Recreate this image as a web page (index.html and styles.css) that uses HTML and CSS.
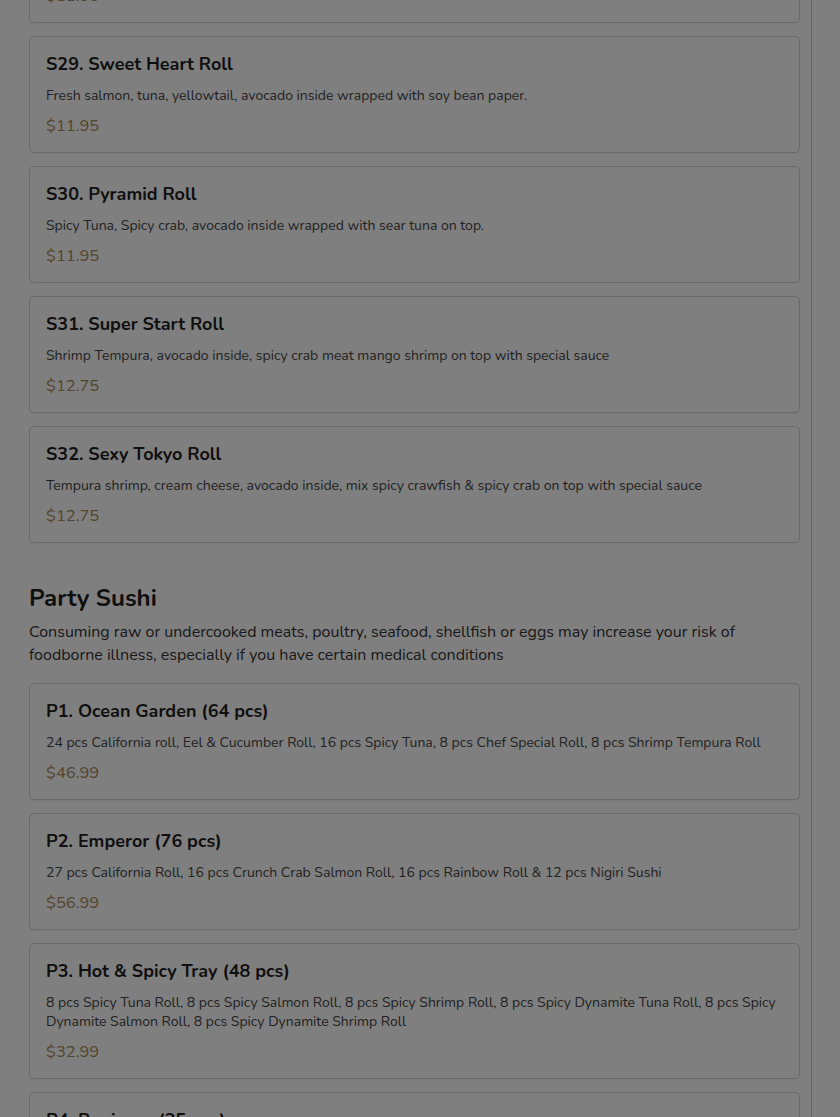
FILE: index.html
```html
<!DOCTYPE html>
<html lang="en">
<head>
<meta charset="utf-8">
<title>Menu</title>
<link rel="stylesheet" href="styles.css">
</head>
<body>
<div class="page">
  <main class="menu">
    <div class="scroll">
      <section class="section">
        <div class="cards">
          <article class="card">
            <h3 class="card-title">S28. Dragon Roll</h3>
            <p class="card-desc">Shrimp tempura, cucumber inside, eel &amp; avocado on top with eel sauce.</p>
            <p class="card-price">$11.95</p>
          </article>
          <article class="card">
            <h3 class="card-title">S29. Sweet Heart Roll</h3>
            <p class="card-desc">Fresh salmon, tuna, yellowtail, avocado inside wrapped with soy bean paper.</p>
            <p class="card-price">$11.95</p>
          </article>
          <article class="card">
            <h3 class="card-title">S30. Pyramid Roll</h3>
            <p class="card-desc">Spicy Tuna, Spicy crab, avocado inside wrapped with sear tuna on top.</p>
            <p class="card-price">$11.95</p>
          </article>
          <article class="card">
            <h3 class="card-title">S31. Super Start Roll</h3>
            <p class="card-desc">Shrimp Tempura, avocado inside, spicy crab meat mango shrimp on top with special sauce</p>
            <p class="card-price">$12.75</p>
          </article>
          <article class="card">
            <h3 class="card-title">S32. Sexy Tokyo Roll</h3>
            <p class="card-desc">Tempura shrimp, cream cheese, avocado inside, mix spicy crawfish &amp; spicy crab on top with special sauce</p>
            <p class="card-price">$12.75</p>
          </article>
        </div>
      </section>
      <section class="section section-head">
        <h2 class="section-title">Party Sushi</h2>
        <p class="section-desc">Consuming raw or undercooked meats, poultry, seafood, shellfish or eggs may increase your risk of foodborne illness, especially if you have certain medical conditions</p>
        <div class="cards">
          <article class="card">
            <h3 class="card-title">P1. Ocean Garden (64 pcs)</h3>
            <p class="card-desc">24 pcs California roll, Eel &amp; Cucumber Roll, 16 pcs Spicy Tuna, 8 pcs Chef Special Roll, 8 pcs Shrimp Tempura Roll</p>
            <p class="card-price">$46.99</p>
          </article>
          <article class="card">
            <h3 class="card-title">P2. Emperor (76 pcs)</h3>
            <p class="card-desc">27 pcs California Roll, 16 pcs Crunch Crab Salmon Roll, 16 pcs Rainbow Roll &amp; 12 pcs Nigiri Sushi</p>
            <p class="card-price">$56.99</p>
          </article>
          <article class="card">
            <h3 class="card-title">P3. Hot &amp; Spicy Tray (48 pcs)</h3>
            <p class="card-desc">8 pcs Spicy Tuna Roll, 8 pcs Spicy Salmon Roll, 8 pcs Spicy Shrimp Roll, 8 pcs Spicy Dynamite Tuna Roll, 8 pcs Spicy Dynamite Salmon Roll, 8 pcs Spicy Dynamite Shrimp Roll</p>
            <p class="card-price">$32.99</p>
          </article>
          <article class="card">
            <h3 class="card-title">P4. Beginner (35 pcs)</h3>
            <p class="card-desc">8 pcs California Roll, 8 pcs Philadelphia Roll, 8 pcs Avocado Roll, 11 pcs Nigiri Sushi</p>
            <p class="card-price">$29.99</p>
          </article>
        </div>
      </section>
    </div>
  </main>
  <aside class="side"></aside>
</div>
<div class="overlay"></div>
</body>
</html>
```
FILE: styles.css
```css
* { box-sizing: border-box; }
html, body { margin: 0; padding: 0; }
body {
  background: #ffffff;
  font-family: "Nunito", "Lato", "Liberation Sans", sans-serif;
  color: #222;
  overflow: hidden;
}
.page {
  display: flex;
  min-height: 100vh;
}
.menu {
  width: 812px;
  flex: none;
  border-right: 1px solid #cccccc;
  padding: 0 11px 0 29px;
}
.side { flex: 1; }
.scroll { margin-top: -94px; }
.cards {
  display: flex;
  flex-direction: column;
  gap: 13px;
}
.card {
  border: 1px solid #d4d4d4;
  border-radius: 5px;
  background: #fff;
  padding: 16px 16px 15px;
  box-shadow: 0 1px 2px rgba(0,0,0,0.06);
}
.card-title {
  margin: 0;
  font-size: 18px;
  line-height: 22px;
  font-weight: 700;
  color: #1e1e1e;
}
.card-desc {
  margin: 11px 0 0;
  font-size: 14px;
  line-height: 19px;
  color: #444;
}
.card-price {
  margin: 10px 0 0;
  font-size: 16.5px;
  line-height: 22px;
  color: #a88a5a;
}
.section-head { margin-top: 39px; }
.section-title {
  margin: 0;
  font-size: 24px;
  line-height: 32px;
  font-weight: 700;
  color: #1e1e1e;
}
.section-desc {
  margin: 7px 0 16px;
  font-size: 16px;
  line-height: 23px;
  color: #333;
}
.overlay {
  position: fixed;
  inset: 0;
  background: rgba(0,0,0,0.5);
}
```
